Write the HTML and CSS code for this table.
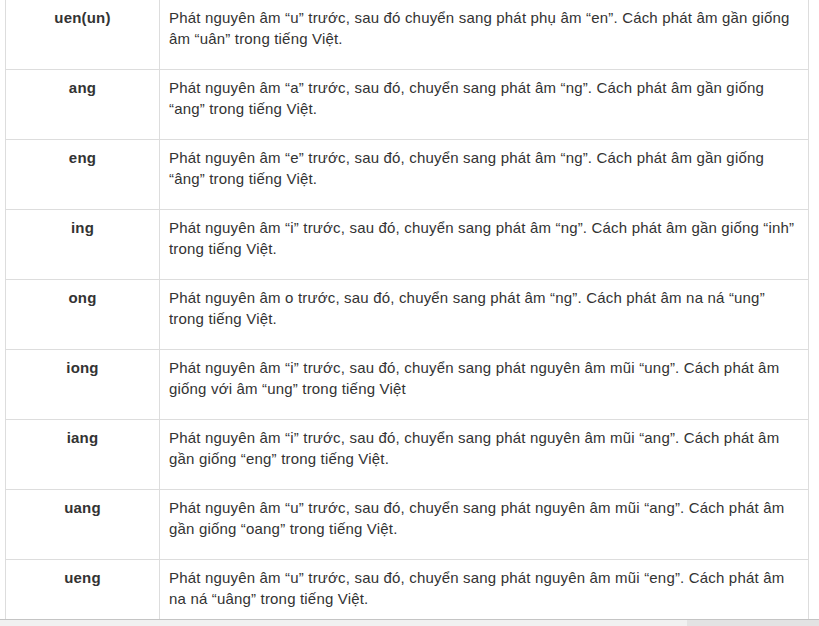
FILE: index.html
```html
<!DOCTYPE html>
<html lang="vi">
<head>
<meta charset="utf-8">
<title>Vận mẫu</title>
<link rel="stylesheet" href="styles.css">
</head>
<body>
<div class="viewport">
  <table class="phon">
    <colgroup><col class="c1"><col class="c2"></colgroup>
    <tbody>
      <tr><td class="key">uen(un)</td><td>Phát nguyên âm “u” trước, sau đó chuyển sang phát phụ âm “en”. Cách phát âm gần giống âm “uân” trong tiếng Việt.</td></tr>
      <tr><td class="key">ang</td><td>Phát nguyên âm “a” trước, sau đó, chuyển sang phát âm “ng”. Cách phát âm gần giống “ang” trong tiếng Việt.</td></tr>
      <tr><td class="key">eng</td><td>Phát nguyên âm “e” trước, sau đó, chuyển sang phát âm “ng”. Cách phát âm gần giống “âng” trong tiếng Việt.</td></tr>
      <tr><td class="key">ing</td><td>Phát nguyên âm “i” trước, sau đó, chuyển sang phát âm “ng”. Cách phát âm gần giống “inh” trong tiếng Việt.</td></tr>
      <tr><td class="key">ong</td><td>Phát nguyên âm o trước, sau đó, chuyển sang phát âm “ng”. Cách phát âm na ná “ung” trong tiếng Việt.</td></tr>
      <tr><td class="key">iong</td><td>Phát nguyên âm “i” trước, sau đó, chuyển sang phát nguyên âm mũi “ung”. Cách phát âm giống với âm “ung” trong tiếng Việt</td></tr>
      <tr><td class="key">iang</td><td>Phát nguyên âm “i” trước, sau đó, chuyển sang phát nguyên âm mũi “ang”. Cách phát âm gần giống “eng” trong tiếng Việt.</td></tr>
      <tr><td class="key">uang</td><td>Phát nguyên âm “u” trước, sau đó, chuyển sang phát nguyên âm mũi “ang”. Cách phát âm gần giống “oang” trong tiếng Việt.</td></tr>
      <tr><td class="key">ueng</td><td>Phát nguyên âm “u” trước, sau đó, chuyển sang phát nguyên âm mũi “eng”. Cách phát âm na ná “uâng” trong tiếng Việt.</td></tr>
    </tbody>
  </table>
</div>
<div class="hbar"><div class="thumb"></div></div>
</body>
</html>
```
FILE: styles.css
```css
html, body {
  margin: 0;
  padding: 0;
  background: #fff;
}
body {
  font-family: "Liberation Sans", Arial, sans-serif;
  color: #333;
}
.viewport {
  height: 620px;
  overflow: hidden;
  border-bottom: 1px solid #c4c4c4;
  box-sizing: border-box;
}
.phon {
  margin: -1px 0 0 5px;
  width: 804px;
  border-collapse: collapse;
  table-layout: fixed;
}
.phon .c1 { width: 154px; }
.phon td {
  border: 1px solid #ddd;
  height: 70px;
  box-sizing: border-box;
  padding: 7px 10px 0 9px;
  vertical-align: top;
  font-size: 15px;
  line-height: 21px;
  letter-spacing: 0.18px;
}
.phon td.key {
  text-align: center;
  font-weight: bold;
  padding-left: 0;
  padding-right: 0;
  letter-spacing: 0.2px;
}
.hbar {
  height: 6px;
  background: #f1f1f1;
  display: flex;
  justify-content: flex-end;
}
.thumb {
  width: 132px;
  background: #e3e3e3;
}
```
